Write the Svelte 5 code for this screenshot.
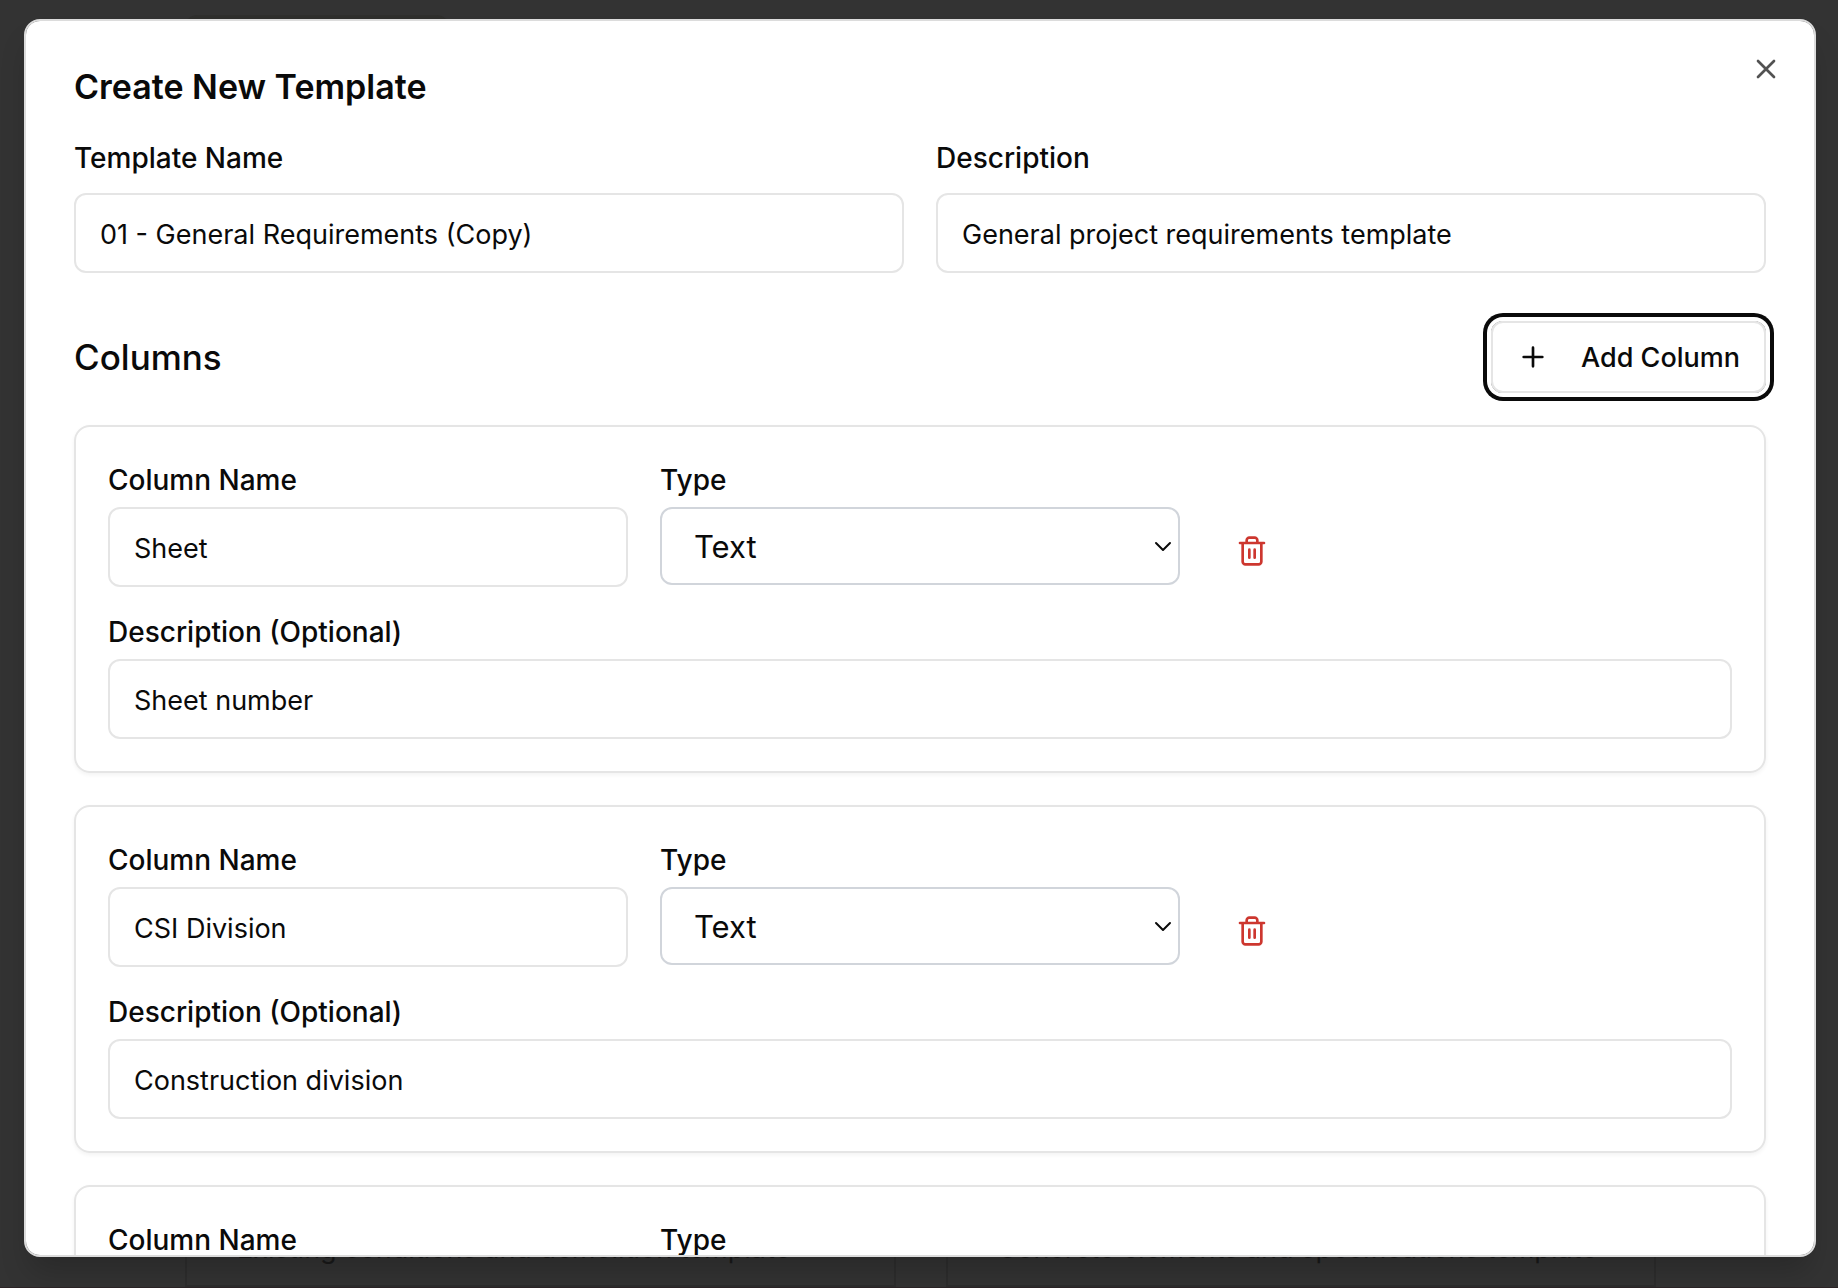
<script>
  let columns = $state([
    { name: 'Sheet', type: 'Text', description: 'Sheet number' },
    { name: 'CSI Division', type: 'Text', description: 'Construction division' },
    { name: 'Section', type: 'Text', description: 'Section title' }
  ]);
  let templateName = $state('01 - General Requirements (Copy)');
  let templateDescription = $state('General project requirements template');
  const types = ['Text', 'Number', 'Date'];

  function addColumn() {
    columns.push({ name: '', type: 'Text', description: '' });
  }
  function removeColumn(index) {
    columns.splice(index, 1);
  }
</script>

<div class="page">
  <div class="backdrop" aria-hidden="true">
    <div class="behind-top"></div>
    <div class="behind-card">Existing conditions and demolition template</div>
    <div class="behind-card">Concrete elements and specifications template</div>
  </div>

  <div class="dialog" role="dialog" aria-modal="true" aria-labelledby="dialog-title">
    <button class="close" type="button" aria-label="Close">
      <svg viewBox="0 0 24 24"><path d="M18 6 6 18M6 6l12 12" /></svg>
    </button>

    <h2 class="title" id="dialog-title">Create New Template</h2>

    <div class="pair">
      <div class="field wide-gap">
        <label for="template-name">Template Name</label>
        <input id="template-name" type="text" bind:value={templateName} />
      </div>
      <div class="field wide-gap">
        <label for="template-description">Description</label>
        <input id="template-description" type="text" bind:value={templateDescription} />
      </div>
    </div>

    <div class="section-head">
      <h3>Columns</h3>
      <button class="add" type="button" onclick={addColumn}>
        <svg viewBox="0 0 24 24"><path d="M5 12h14M12 5v14" /></svg>
        Add Column
      </button>
    </div>

    <div class="cards">
      {#each columns as column, i}
        <section class="card">
          <div class="row">
            <div class="field">
              <label for="name-{i}">Column Name</label>
              <input id="name-{i}" type="text" bind:value={column.name} />
            </div>
            <div class="field">
              <label for="type-{i}">Type</label>
              <div class="select-wrap">
                <select id="type-{i}" bind:value={column.type}>
                  {#each types as type}
                    <option>{type}</option>
                  {/each}
                </select>
                <svg class="chevron" viewBox="0 0 18 12"><path d="M2 2l7 7 7-7" /></svg>
              </div>
            </div>
            <button class="remove" type="button" aria-label="Delete column" onclick={() => removeColumn(i)}>
              <svg viewBox="0 0 24 24">
                <path d="M3 6h18M19 6v14c0 1-1 2-2 2H7c-1 0-2-1-2-2V6M8 6V4c0-1 1-2 2-2h4c1 0 2 1 2 2v2M10 11v6M14 11v6" />
              </svg>
            </button>
          </div>
          <div class="field">
            <label for="description-{i}">Description (Optional)</label>
            <input id="description-{i}" type="text" bind:value={column.description} />
          </div>
        </section>
      {/each}
    </div>
  </div>
</div>

<style>
  :global(body) {
    margin: 0;
    background: #333;
  }
  .page {
    position: relative;
    box-sizing: border-box;
    height: 100vh;
    padding: 19px 22px 31px 24px;
    overflow: hidden;
    font-family: Inter, 'Liberation Sans', sans-serif;
    color: #0a0a0a;
  }
  .page :global(*) {
    box-sizing: border-box;
  }
  .backdrop {
    position: absolute;
    inset: 0;
    display: grid;
    grid-template-columns: repeat(2, minmax(0, 1fr));
    align-content: space-between;
    column-gap: 50px;
    padding: 15px 182px 0 185px;
    border-bottom: 1px solid #2c2426;
    font-size: 27px;
    line-height: 44px;
    color: #191919;
  }
  .behind-top {
    grid-column: 1 / -1;
    width: 264px;
    height: 40px;
    border-radius: 12px;
    background: #2f2f2d;
  }
  .behind-card {
    height: 60px;
    padding: 0 50px;
    border: 2px solid #2d2d2d;
    border-top: 0;
    white-space: nowrap;
  }
  .dialog {
    position: relative;
    height: 100%;
    padding: 48px;
    overflow-y: auto;
    scrollbar-width: none;
    border: 2px solid #dcdcdc;
    border-radius: 16px;
    background: #fff;
    background-clip: padding-box;
    box-shadow: 0 20px 30px -6px rgb(0 0 0 / 0.2);
  }
  svg {
    display: block;
    flex: none;
    width: 32px;
    height: 32px;
    fill: none;
    stroke: currentColor;
    stroke-width: 2;
    stroke-linecap: round;
    stroke-linejoin: round;
  }
  button {
    padding: 0;
    border: 0;
    background: none;
    font: inherit;
    color: inherit;
    cursor: pointer;
  }
  .close {
    position: absolute;
    top: 32px;
    right: 32px;
    opacity: 0.7;
  }
  .title {
    margin: 0 0 32px;
    font-size: 34px;
    font-weight: 600;
    line-height: 36px;
  }
  .pair {
    display: grid;
    grid-template-columns: 1fr 1fr;
    gap: 32px;
  }
  .field {
    display: flex;
    flex-direction: column;
    gap: 6px;
    min-width: 0;
  }
  .wide-gap {
    gap: 14px;
  }
  label {
    font-size: 28px;
    font-weight: 500;
    line-height: 42px;
  }
  input {
    width: 100%;
    height: 80px;
    padding: 2px 24px 0;
    border: 2px solid #e5e5e5;
    border-radius: 12px;
    outline: 0;
    background: #fff;
    font: 400 27px/40px Inter, 'Liberation Sans', sans-serif;
    color: inherit;
  }
  .section-head {
    display: flex;
    align-items: center;
    justify-content: space-between;
    margin: 48px 0 32px;
  }
  h3 {
    margin: 0;
    font-size: 35px;
    font-weight: 500;
    line-height: 56px;
  }
  .add {
    display: flex;
    align-items: center;
    gap: 32px;
    height: 72px;
    padding: 0 24px;
    border: 2px solid #e5e5e5;
    border-radius: 12px;
    box-shadow: 0 0 0 4px #fff, 0 0 0 8px #0a0a0a;
    font-size: 27px;
    font-weight: 500;
  }
  .cards {
    display: grid;
    gap: 32px;
  }
  .card {
    display: grid;
    gap: 24px;
    padding: 32px;
    border: 2px solid #e5e5e5;
    border-radius: 16px;
    box-shadow: 0 2px 4px rgb(0 0 0 / 0.05);
  }
  .row {
    display: grid;
    grid-template-columns: repeat(3, 1fr);
    gap: 32px;
  }
  .select-wrap {
    position: relative;
  }
  select {
    display: block;
    width: 100%;
    height: 78px;
    padding: 2px 32px 0;
    appearance: none;
    border: 2px solid #d1d5db;
    border-radius: 12px;
    outline: 0;
    background: #fff;
    font: 400 31px/48px Inter, 'Liberation Sans', sans-serif;
    color: inherit;
  }
  .chevron {
    position: absolute;
    top: 34px;
    right: 8px;
    width: 18px;
    height: 12px;
    pointer-events: none;
  }
  .remove {
    display: grid;
    place-items: center;
    align-self: end;
    width: 80px;
    height: 72px;
    color: #cd372f;
  }
</style>
